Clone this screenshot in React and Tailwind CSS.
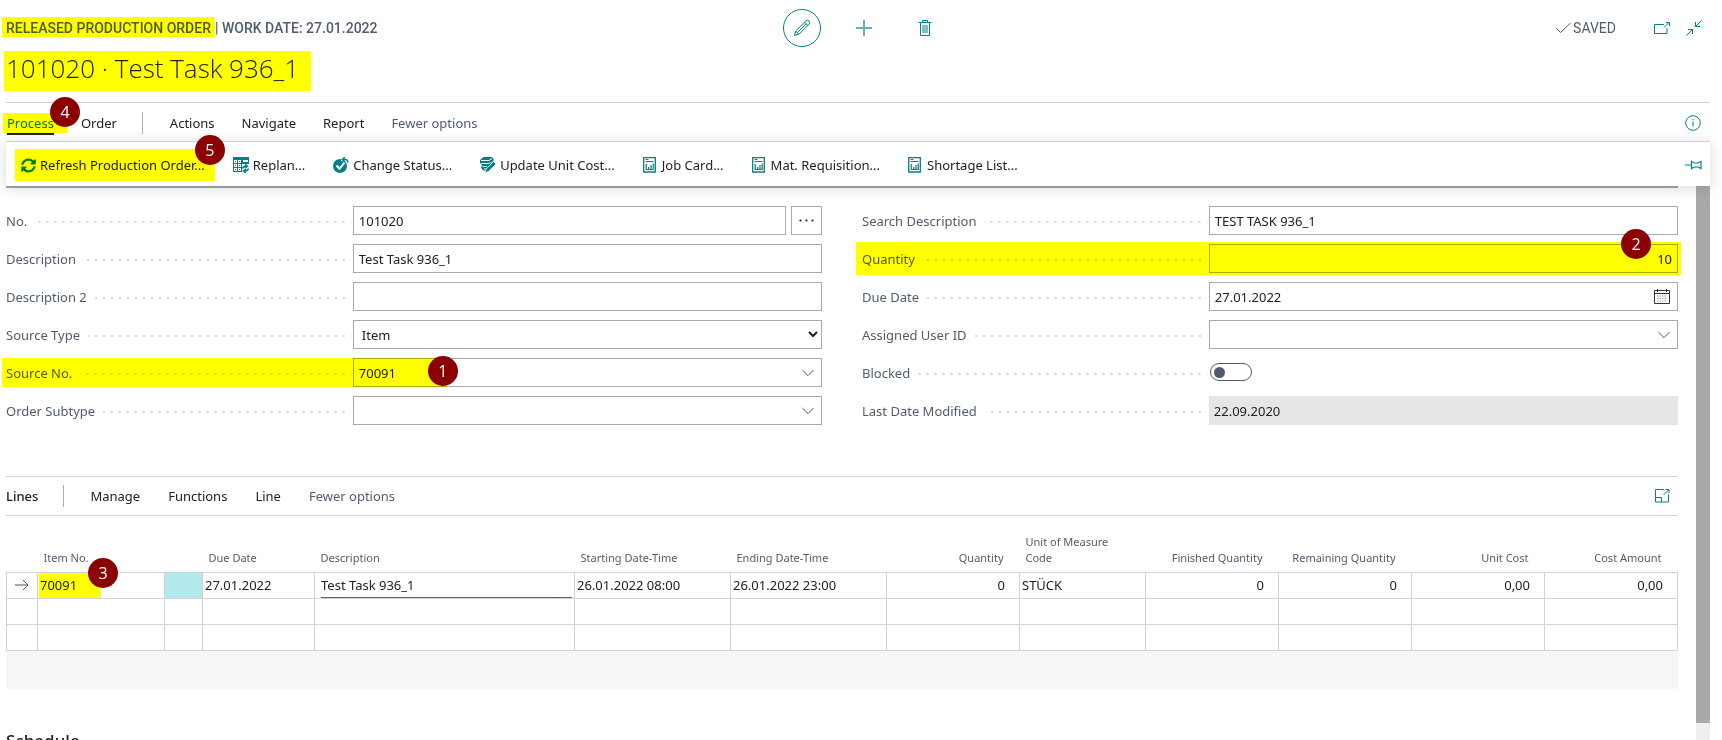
import { useState } from 'react'

const TABS = ['Actions', 'Navigate', 'Report']
const LINE_TABS = ['Manage', 'Functions', 'Line']

const ACTIONS = [
  { label: 'Replan...',           icon: ReplanIcon },
  { label: 'Change Status...',    icon: StatusIcon },
  { label: 'Update Unit Cost...', icon: CostIcon },
  { label: 'Job Card...',         icon: ReportIcon },
  { label: 'Mat. Requisition...', icon: ReportIcon },
  { label: 'Shortage List...',    icon: ReportIcon },
]

const COLUMNS = [
  { key: 'marker',    label: '',                     width: 'w-[31px]' },
  { key: 'item',      label: 'Item No.',             width: 'w-[127px]' },
  { key: 'assist',    label: '',                     width: 'w-[38px]' },
  { key: 'due',       label: 'Due Date',             width: 'w-[112px]' },
  { key: 'desc',      label: 'Description',          width: 'w-[260px]' },
  { key: 'start',     label: 'Starting Date-Time',   width: 'w-[156px]' },
  { key: 'end',       label: 'Ending Date-Time',     width: 'w-[156px]' },
  { key: 'qty',       label: 'Quantity',             width: 'w-[133px]', right: true },
  { key: 'uom',       label: 'Unit of Measure Code', width: 'w-[126px]' },
  { key: 'finished',  label: 'Finished Quantity',    width: 'w-[133px]', right: true },
  { key: 'remaining', label: 'Remaining Quantity',   width: 'w-[133px]', right: true },
  { key: 'unitCost',  label: 'Unit Cost',            width: 'w-[133px]', right: true },
  { key: 'amount',    label: 'Cost Amount',          width: 'w-[133px]', right: true },
]

const LINE = {
  due: '27.01.2022',
  start: '26.01.2022 08:00',
  end: '26.01.2022 23:00',
  qty: '0',
  uom: 'STÜCK',
  finished: '0',
  remaining: '0',
  unitCost: '0,00',
  amount: '0,00',
}

export default function App() {
  return (
    <div className="h-screen overflow-hidden flex flex-col bg-white text-[#212121] text-[13px] leading-5 font-['Noto_Sans','Open_Sans',sans-serif]">
      <Header />
      <Tabs />
      <ActionBar />
      <div className="flex-1 min-h-0 flex pr-3">
        <main className="flex-1 min-w-0 overflow-hidden pl-1.5 pr-[18px]">
          <div className="h-0.5 bg-[#a3a7b0]" />
          <General />
          <Lines />
          <h2 className="mt-10 text-[17px] leading-6 font-medium">Schedule</h2>
        </main>
        {/* Scroll bar */}
        <div className="w-3.5 bg-[#eeeeee]">
          <div className="h-[97%] bg-[#a9a9a9]" />
        </div>
      </div>
    </div>
  )
}

function Header() {
  return (
    <header className="pl-1.5 pr-3 pt-[9px]">
      <div className="h-[38px] grid grid-cols-[1fr_auto_1fr] items-center">
        <div className="flex font-['Roboto',sans-serif] text-sm leading-[18px] font-medium text-[#505c6d] whitespace-nowrap">
          <span className="relative">
            RELEASED PRODUCTION ORDER
            <Highlight className="-left-1 -right-1 -top-0.5 bottom-0" />
          </span>
          <span className="ml-1">| WORK DATE: 27.01.2022</span>
        </div>
        <div className="flex items-center text-[#008089]">
          <button aria-label="Edit" className="w-[38px] h-[38px] rounded-full border border-[#008089] flex items-center justify-center">
            <PencilIcon />
          </button>
          <button aria-label="New" className="ml-[35px]"><PlusIcon /></button>
          <button aria-label="Delete" className="ml-[45px]"><TrashIcon /></button>
        </div>
        <div className="flex items-center justify-end text-[#008089] pr-2">
          <span className="flex items-center gap-0.5 mr-[38px] font-['Roboto',sans-serif] text-sm text-[#505c6d]">
            <CheckIcon /> SAVED
          </span>
          <button aria-label="Open in new window" className="mr-4"><PopoutIcon /></button>
          <button aria-label="Collapse"><CollapseIcon /></button>
        </div>
      </div>
      <div className="mt-1 mb-[11px] flex">
        <h1 className="relative h-10 pr-3 font-['Open_Sans','Noto_Sans',sans-serif] text-[26px] leading-[34px] font-light">
          101020 · Test Task 936_1
          <Highlight className="-left-0.5 right-0 inset-y-0" />
        </h1>
      </div>
    </header>
  )
}

function Tabs() {
  return (
    <div className="pl-1.5 pr-3">
      <nav className="h-[39px] border-t border-[#d0d3d8] flex items-center gap-[27px] pt-0.5 pl-px pr-[9px]">
        <button className="relative text-[#008089]">
          Process
          <span className="absolute inset-x-0 top-5 h-0.5 bg-[#212121]" />
          <Highlight className="-left-1 -right-3.5 top-0 bottom-0" />
          <Badge className="left-[43px] -top-4">4</Badge>
        </button>
        <button>Order</button>
        <span className="w-px h-[22px] -ml-0.5 bg-[#a9afb8]" />
        {TABS.map(tab => <button key={tab}>{tab}</button>)}
        <button className="text-[#505c6d]">Fewer options</button>
        <button aria-label="Details" className="ml-auto text-[#008089]"><InfoIcon /></button>
      </nav>
    </div>
  )
}

function ActionBar() {
  return (
    <div className="relative z-10 ml-1.5 mr-3 h-[45px] shrink-0 border-t border-[#d0d3d8] bg-white shadow-[0_2px_14px_rgba(0,0,0,0.15)] flex items-center gap-7 pt-0.5 pl-[15px] pr-2 whitespace-nowrap">
      <button className="relative flex items-center gap-1 text-[#212121]">
        <RefreshIcon />Refresh Production Order...
        <Highlight className="-left-1.5 -right-2.5 -inset-y-1.5" />
        <Badge className="-right-5 -top-5">5</Badge>
      </button>
      {ACTIONS.map(({ label, icon: Icon }) => (
        <button key={label} className="flex items-center gap-1">
          <Icon />{label}
        </button>
      ))}
      <button aria-label="Pin" className="ml-auto text-[#008089]"><PinIcon /></button>
    </div>
  )
}

function General() {
  const [blocked, setBlocked] = useState(false)

  return (
    <section className="mt-[18px] grid grid-cols-2 gap-x-10">
      <div className="space-y-[9px]">
        <Field id="no" label="No.">
          <div className="flex gap-[5px]">
            <TextBox id="no" defaultValue="101020" />
            <button aria-label="Assist edit" className="w-[31px] shrink-0 border border-[#a9a9a9] flex items-center justify-center">
              <DotsIcon />
            </button>
          </div>
        </Field>
        <Field id="description" label="Description">
          <TextBox id="description" defaultValue="Test Task 936_1" />
        </Field>
        <Field id="description2" label="Description 2">
          <TextBox id="description2" />
        </Field>
        <Field id="sourceType" label="Source Type">
          <select id="sourceType" className="w-full h-[29px] border border-[#a9a9a9] bg-white pl-1">
            <option>Item</option>
          </select>
        </Field>
        <Field id="sourceNo" label="Source No." mark={<Highlight className="-left-1 right-[46%] inset-y-0" />}>
          <TextBox id="sourceNo" defaultValue="70091" icon={<ChevronIcon />} />
          <Badge className="left-[75px] -top-0.5">1</Badge>
        </Field>
        <Field id="subtype" label="Order Subtype">
          <TextBox id="subtype" icon={<ChevronIcon />} />
        </Field>
      </div>
      <div className="space-y-[9px]">
        <Field id="search" label="Search Description">
          <TextBox id="search" defaultValue="TEST TASK 936_1" />
        </Field>
        <Field id="quantity" label="Quantity" mark={<Highlight className="-left-1.5 -right-[3px] -inset-y-0.5" />}>
          <TextBox id="quantity" defaultValue="10" align="text-right" />
          <Badge className="right-[27px] -top-[15px]">2</Badge>
        </Field>
        <Field id="dueDate" label="Due Date">
          <TextBox id="dueDate" defaultValue="27.01.2022" icon={<CalendarIcon />} />
        </Field>
        <Field id="userId" label="Assigned User ID">
          <TextBox id="userId" icon={<ChevronIcon />} />
        </Field>
        <Field id="blocked" label="Blocked">
          <div className="h-7 flex items-center pl-px">
            <input
              id="blocked"
              type="checkbox"
              role="switch"
              checked={blocked}
              onChange={e => setBlocked(e.target.checked)}
              className="appearance-none w-[42px] h-[18px] rounded-full border border-[#505c6d] flex items-center px-[3px] checked:justify-end before:w-[11px] before:h-[11px] before:rounded-full before:bg-[#505c6d]"
            />
          </div>
        </Field>
        <Field id="modified" label="Last Date Modified">
          <input id="modified" readOnly defaultValue="22.09.2020" className="w-full h-[29px] bg-[#e5e6e8] px-[5px] outline-none" />
        </Field>
      </div>
    </section>
  )
}

function Field({ id, label, mark, children }) {
  return (
    <div className="relative h-[29px] flex">
      <div className="w-[42.5%] shrink-0 flex items-center text-[#505c6d]">
        <label htmlFor={id} className="whitespace-nowrap">{label}</label>
        <span className="flex-1 ml-2 mr-0.5 mt-0.5 h-0.5 bg-[image:linear-gradient(to_right,#d6d8dc_2px,transparent_2px)] bg-[length:8px_2px] bg-right" />
      </div>
      <div className="relative flex-1 min-w-0">{children}</div>
      {mark}
    </div>
  )
}

function TextBox({ id, defaultValue, align = 'text-left', icon }) {
  return (
    <div className="w-full h-[29px] border border-[#a9a9a9] bg-white flex items-center px-[5px]">
      <input id={id} defaultValue={defaultValue} className={`flex-1 min-w-0 h-full outline-none ${align}`} />
      {icon && <button aria-label="Choose a value" className="pr-0.5">{icon}</button>}
    </div>
  )
}

function Lines() {
  return (
    <section className="mt-[51px]">
      <div className="h-[40px] border-y border-[#d0d3d8] flex items-center gap-7">
        <h2 className="font-medium">Lines</h2>
        <span className="w-px h-[22px] -ml-[3px] -mr-0.5 bg-[#a9afb8]" />
        {LINE_TABS.map(tab => <button key={tab}>{tab}</button>)}
        <button className="text-[#505c6d]">Fewer options</button>
        <button aria-label="Focus mode" className="ml-auto mr-2 text-[#008089]"><ExpandIcon /></button>
      </div>
      <div className="bg-[#f5f6f8] pb-[38px]">
        <table className="w-full table-fixed border-collapse bg-white">
          <thead>
            <tr className="h-14 text-[11px] text-[#505c6d]">
              {COLUMNS.map(col => (
                <th
                  key={col.key}
                  className={`${col.width} align-bottom font-normal leading-4 pb-1.5 pl-1.5 ${
                    col.right ? 'text-right pr-4 whitespace-nowrap' : 'text-left'
                  } ${col.key === 'uom' ? 'pr-7' : 'whitespace-nowrap'}`}
                >
                  {col.label}
                </th>
              ))}
            </tr>
          </thead>
          <tbody>
            <tr className="h-[26px]">
              {COLUMNS.map(col => <Cell key={col.key} col={col} />)}
            </tr>
            {[2, 3].map(row => (
              <tr key={row} className="h-[26px]">
                {COLUMNS.map(col => <td key={col.key} className="border border-[#d0d3d8]" />)}
              </tr>
            ))}
          </tbody>
        </table>
      </div>
    </section>
  )
}

function Cell({ col }) {
  if (col.key === 'marker') {
    return <td className="border border-[#d0d3d8] pl-2"><ArrowIcon /></td>
  }
  if (col.key === 'item') {
    return (
      <td className="relative border border-[#d0d3d8] pl-0.5">
        70091
        <Highlight className="left-px w-[62px] inset-y-0" />
        <Badge className="left-[50px] -top-[15px]">3</Badge>
      </td>
    )
  }
  if (col.key === 'assist') {
    return <td className="border border-[#d0d3d8] bg-[#b2e9ec]" />
  }
  if (col.key === 'desc') {
    return (
      <td className="border border-[#d0d3d8] pl-1.5 pr-0.5">
        <input aria-label="Description" defaultValue="Test Task 936_1" className="block w-full h-[25px] border-b border-[#00898d] outline-none" />
      </td>
    )
  }
  return (
    <td className={`border border-[#d0d3d8] whitespace-nowrap ${col.right ? 'text-right pr-3.5' : 'pl-0.5'}`}>
      {LINE[col.key]}
    </td>
  )
}

// Marker pen stroke, multiplied over whatever lies beneath it.
function Highlight({ className }) {
  return <span className={`absolute pointer-events-none bg-[#ffff00] mix-blend-multiply ${className}`} />
}

// Numbered step marker.
function Badge({ className, children }) {
  return (
    <span className={`absolute z-20 w-[30px] h-[30px] rounded-full bg-[#8b0000] text-white text-base leading-[30px] text-center font-['Open_Sans',sans-serif] ${className}`}>
      {children}
    </span>
  )
}

function PencilIcon() {
  return (
    <svg width="18" height="18" viewBox="0 0 18 18" fill="none" stroke="currentColor">
      <path d="M1.500 16.500l1.200-4.400L12.800 2a2.200 2.200 0 0 1 3.200 3.200L5.900 15.300zM2.700 12.100l3.200 3.200M11.600 3.200l3.200 3.200M4.300 13.700l8.900-8.900" />
    </svg>
  )
}

function PlusIcon() {
  return (
    <svg width="16" height="16" viewBox="0 0 16 16" stroke="currentColor" strokeWidth="2" opacity="0.6">
      <path d="M8 0v16M0 8h16" />
    </svg>
  )
}

function TrashIcon() {
  return (
    <svg width="16" height="16" viewBox="0 0 16 16" fill="none" stroke="currentColor">
      <path d="M1.500 2.500h13M5.500 2.500v-2h5v2M3.500 2.500v13h9v-13M6 5v8M8 5v8M10 5v8" />
    </svg>
  )
}

function CheckIcon() {
  return (
    <svg width="15" height="12" viewBox="0 0 15 12" fill="none" stroke="currentColor">
      <path d="M.5 6.500l4 4 10-9.500" />
    </svg>
  )
}

function PopoutIcon() {
  return (
    <svg width="16" height="12" viewBox="0 0 16 12" fill="none" stroke="currentColor">
      <path d="M10 2.500H.5v9h12.500V6M10 5.500l5-5M12 .5h3.500V4" />
    </svg>
  )
}

function CollapseIcon() {
  return (
    <svg width="16" height="16" viewBox="0 0 16 16" fill="none" stroke="currentColor">
      <path d="M.5 15.500l6-6M2 9.500h4.500V14M15.500.5l-6 6M9.500 2v4.500H14" />
    </svg>
  )
}

function InfoIcon() {
  return (
    <svg width="16" height="16" viewBox="0 0 16 16" fill="none" stroke="currentColor">
      <circle cx="8" cy="8" r="7.300" />
      <path d="M8 6.500v5M8 4v1.300" />
    </svg>
  )
}

function PinIcon() {
  return (
    <svg width="17" height="10" viewBox="0 0 17 10" fill="none" stroke="currentColor">
      <path strokeWidth="1.200" d="M0 5h6.500M6.500.5v9M6.500 1.500l3 1.500h3.500l3-1.500v7l-3-1.500H9.500l-3 1.500" />
    </svg>
  )
}

function ExpandIcon() {
  return (
    <svg width="15" height="14" viewBox="0 0 15 14" fill="none" stroke="currentColor">
      <path d="M9 .5H.5v12.500h13V5.500M.5 8.500h6v4.500M8.500 6L13.500 1M10.500.5h3.500V4" />
    </svg>
  )
}

function RefreshIcon() {
  return (
    <svg width="15" height="15" viewBox="0 0 512 512" fill="#008089">
      <path d="M371 143c-32-30-73-46-116-46-78 0-145 54-164 127-1 5-6 9-12 9H23c-8 0-13-7-12-14C32 104 134 16 256 16c67 0 128 26 173 69l36-36c15-15 41-4 41 17v134c0 13-11 24-24 24H348c-21 0-32-26-17-41zM32 288h134c21 0 32 26 17 41l-41 41c32 30 73 46 116 46 78 0 145-54 164-127 1-5 6-9 12-9h56c8 0 13 7 12 14-21 115-123 203-245 203-67 0-128-26-173-69l-36 36c-15 15-41 4-41-17V312c0-13 11-24 24-24z" />
    </svg>
  )
}

function ReplanIcon() {
  return (
    <svg width="16" height="16" viewBox="0 0 16 16">
      <path fill="#008089" d="M0 0h16v7H9v8H0z" />
      <path fill="#fff" d="M1 3h3v3H1zM5 3h3v3H5zM1 7h3v3H1zM5 7h3v3H5zM1 11h3v3H1zM5 11h3v3H5zM10 3h5v2h-5z" />
      <path fill="#008089" d="M2 4h1v1H2zM6 4h1v1H6zM2 8h1v1H2zM6 8h1v1H6zM2 12h1v1H2zM6 12h1v1H6z" />
      <path fill="none" stroke="#008089" strokeWidth="1.600" d="M9.500 11.500q.5-2.500 4.500-2.300M12 7.500l2.300 1.700L12 11M15.500 11.500q-.5 2.700-4.500 2.500M13 12l-2.500 2 2.500 2" />
    </svg>
  )
}

function StatusIcon() {
  return (
    <svg width="16" height="16" viewBox="0 0 16 16" fill="none">
      <circle cx="7" cy="9" r="7" fill="#008089" />
      <path d="M3.500 8.500l3 3.200 5-6" stroke="#fff" strokeWidth="2" />
      <path d="M8 2.500h4.500q2 0 2 3" stroke="#fff" strokeWidth="3.500" />
      <path d="M9.500 2.500h3q2.300 0 2.300 3M12 0L9.300 2.500 12 5" stroke="#008089" strokeWidth="1.500" />
    </svg>
  )
}

function CostIcon() {
  return (
    <svg width="16" height="16" viewBox="0 0 16 16">
      <path fill="#008089" d="M3.500 0h8L13.500 1.500V4L11 6l-1 6-5 2-3-1.500L1 10l1-2-2-2V3z" />
      <path fill="none" stroke="#fff" d="M1 3.500h8l3-2M1 6.500h7.500l2-1M2.500 9.500H7M4 12h2" />
      <path fill="#008089" stroke="#fff" strokeWidth="0.800" d="M13.500 4.500L16 7l-7.500 7.500-3.500 1.500 1-3.800z" />
    </svg>
  )
}

function ReportIcon() {
  return (
    <svg className="mr-0.5" width="13" height="16" viewBox="0 0 13 16" fill="none" stroke="#008089">
      <path strokeWidth="1.300" d="M.7.700h11.600v14.300H.7z" />
      <path d="M2.500 2.500h3M2.500 4.500h8" />
      <path strokeWidth="1.200" d="M3.200 7v5.500h7V6.500M5.700 10v2.500M8 8v4.500" />
    </svg>
  )
}

function DotsIcon() {
  return (
    <svg width="15" height="3" viewBox="0 0 15 3" fill="#212121">
      <circle cx="1.500" cy="1.500" r="1.100" />
      <circle cx="7.500" cy="1.500" r="1.100" />
      <circle cx="13.500" cy="1.500" r="1.100" />
    </svg>
  )
}

function ChevronIcon() {
  return (
    <svg width="12" height="8" viewBox="0 0 12 8" fill="none" stroke="#505050">
      <path d="M.4 1l5.600 5.600L11.600 1" />
    </svg>
  )
}

function CalendarIcon() {
  return (
    <svg width="16" height="15" viewBox="0 0 16 15" fill="none" stroke="#333">
      <path d="M.5 1.500h15v13H.5zM.5 4.500h15M3.500 0v3M12.500 0v3" />
      <path strokeDasharray="1.500 1" stroke="#999" d="M3 7h10M3 9.500h10M3 12h10" />
    </svg>
  )
}

function ArrowIcon() {
  return (
    <svg width="14" height="12" viewBox="0 0 14 12" fill="none" stroke="#505050">
      <path d="M0 6h13M8 1l5 5-5 5" />
    </svg>
  )
}
